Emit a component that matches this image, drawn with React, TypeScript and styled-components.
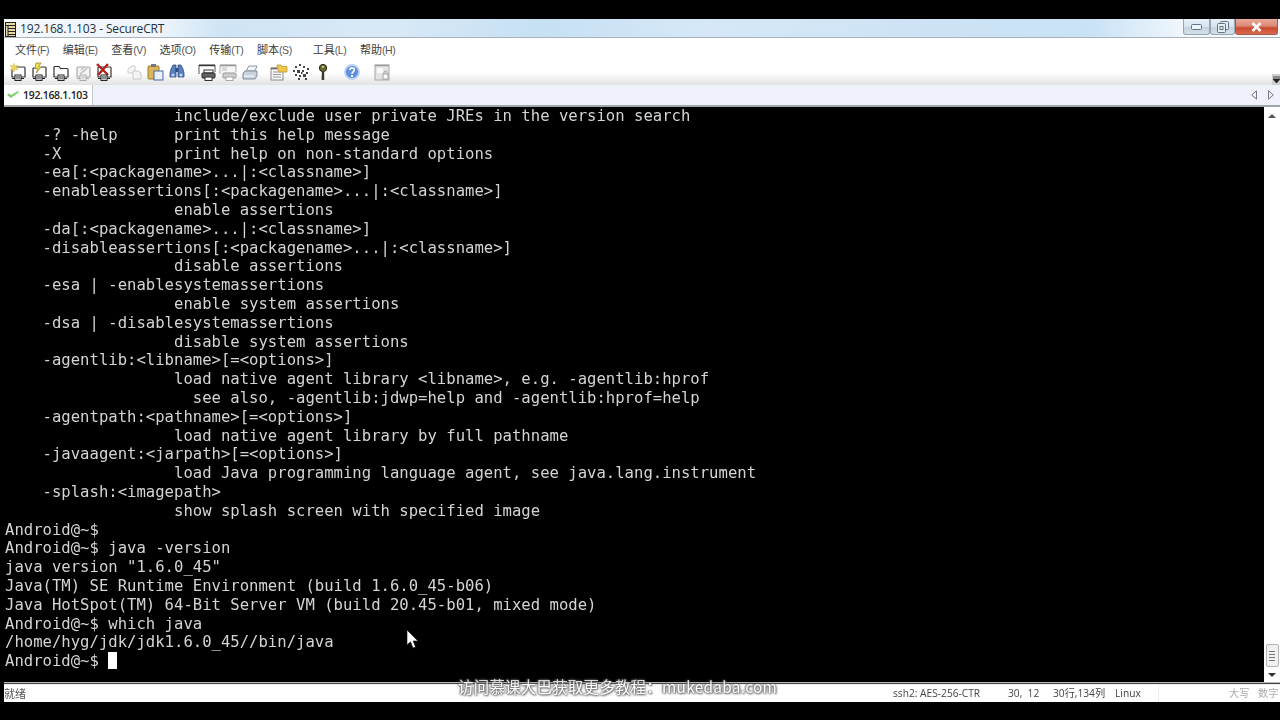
import React from "react";
import styled, { createGlobalStyle } from "styled-components";

const Global = createGlobalStyle`
  html, body { margin: 0; padding: 0; background: #000; }
  body { width: 1280px; height: 720px; overflow: hidden; }
`;

const Page = styled.div`
  width: 1280px;
  height: 720px;
  box-sizing: border-box;
  padding: 19px 0 18px 4px;
  background: #000;
  position: relative;
  overflow: hidden;
`;
const Win = styled.div`
  height: 100%;
  display: flex;
  flex-direction: column;
  filter: blur(0.45px);
`;
const TitleBar = styled.div`
  height: 19px;
  flex: none;
  display: flex;
  align-items: flex-start;
  box-sizing: border-box;
  border-bottom: 1px solid #a9b3bd;
  background: linear-gradient(90deg, #f4f8fc 0%, #eef5fb 12%, #cfe4f5 17%, #d9e9f6 30%, #c6e0f4 42%, #d6e8f7 55%, #cde3f5 72%, #c9e2f6 85%, #e8f2fa 91%, #f6f9fc 93%);
`;
const TitleIcon = styled.svg`
  width: 11px;
  height: 15px;
  margin: 3px 0 0 1px;
  flex: none;
`;
const TitleText = styled.div`
  font: 12px/19px "Open Sans", "Liberation Sans", sans-serif;
  letter-spacing: -0.14px;
  color: #27313a;
  margin-left: 4px;
`;
const WinBtns = styled.div`
  margin-left: auto;
  margin-right: 2px;
  display: flex;
  height: 16px;
`;
const WinBtn = styled.div<{ $w: number; $close?: boolean }>`
  width: ${(p) => p.$w}px;
  box-sizing: border-box;
  display: flex;
  align-items: center;
  justify-content: center;
  border: 1px solid ${(p) => (p.$close ? "#a5584c" : "#97a6b4")};
  border-top: 0;
  border-radius: 0 0 3px 3px;
  background: ${(p) =>
    p.$close
      ? "linear-gradient(180deg,#e8a79a 0%,#dc8a78 45%,#c9492f 60%,#d96c50 100%)"
      : "linear-gradient(180deg,#e6eef5 0%,#d9e5ef 50%,#c5d4e0 55%,#d3e0ea 100%)"};
`;
const MenuBar = styled.div`
  height: 20px;
  flex: none;
  background: #fff;
  display: flex;
  align-items: center;
  padding: 1px 0 0 11px;
  box-sizing: border-box;
  font: 11px/18px "Noto Sans CJK SC", "Liberation Sans", sans-serif;
  color: #3a3a3a;
`;
const MenuItem = styled.div<{ $gap?: number }>`
  margin-left: ${(p) => p.$gap ?? 13.6}px;
  &:first-child { margin-left: 0; }
  white-space: nowrap;
  small { font: 10.5px "Liberation Sans", sans-serif; letter-spacing: -0.4px; color: #555; }
`;
const Toolbar = styled.div`
  height: 27px;
  flex: none;
  display: flex;
  align-items: center;
  gap: 8px;
  padding-left: 3px;
  position: relative;
  background: linear-gradient(180deg, #fff 0%, #fff 55%, #f0f0f0 78%, #e2e2e2 100%);
`;
const Group = styled.div`
  display: flex;
`;
const ToolBtn = styled.div`
  width: 21.6px;
  height: 20px;
  display: flex;
  align-items: center;
  justify-content: center;
`;
const ToolIcon = styled.svg`
  width: 18px;
  height: 18px;
  overflow: visible;
`;
const Chevron = styled.div`
  margin-left: auto;
  align-self: flex-end;
  width: 8px;
  height: 11px;
  background: #d0d0d0;
  display: flex;
  align-items: center;
  justify-content: center;
`;
const TabBar = styled.div`
  height: 22px;
  flex: none;
  display: flex;
  align-items: stretch;
  box-sizing: border-box;
  border-bottom: 2px solid #a2a6aa;
  background: #eff2fa;
`;
const Tab = styled.div`
  width: 89px;
  box-sizing: border-box;
  background: #fff;
  border-right: 1px solid #c6c9ce;
  display: flex;
  align-items: center;
  padding-left: 3px;
  gap: 4px;
  font: 600 10.5px/18px "Open Sans", "Liberation Sans", sans-serif;
  letter-spacing: -0.3px;
  color: #222;
`;
const TabNav = styled.div`
  margin-left: auto;
  margin-right: 6px;
  display: flex;
  align-items: center;
  gap: 11px;
`;
const Body = styled.div`
  flex: 1;
  min-height: 0;
  display: flex;
  background: #000;
  position: relative;
`;
const Terminal = styled.pre`
  flex: 1;
  margin: 0;
  padding: 0 0 0 1px;
  overflow: hidden;
  font-family: "DejaVu Sans Mono", "Liberation Mono", monospace;
  font-size: 15.6px;
  line-height: 18.79px;
  color: #d4d4d4;
`;
const Caret = styled.span`
  display: inline-block;
  width: 9px;
  height: 17px;
  background: #fff;
  vertical-align: -3px;
`;
const Scrollbar = styled.div`
  width: 16px;
  flex: none;
  background: #fff;
  display: flex;
  flex-direction: column;
  align-items: center;
  padding: 7px 0 5px;
  box-sizing: border-box;
`;
const Thumb = styled.div`
  margin-top: auto;
  width: 13px;
  height: 23px;
  box-sizing: border-box;
  border: 1px solid #b5b5b5;
  border-radius: 2px;
  background: #f0f0f0;
  display: flex;
  flex-direction: column;
  align-items: center;
  justify-content: center;
  gap: 2px;
  margin-bottom: 6px;
  i { display: block; width: 6px; height: 1px; background: #777; }
`;
const StatusGap = styled.div`
  height: 3px;
  flex: none;
  background: linear-gradient(180deg, #b9b9b9 0, #b9b9b9 1px, #444 1px, #444 2px, #eee 2px);
`;
const StatusBar = styled.div`
  height: 17px;
  flex: none;
  background: #fff;
  display: flex;
  align-items: center;
  font: 10.2px/17px "Open Sans", "Liberation Sans", "Noto Sans CJK SC", sans-serif;
  color: #444;
  white-space: nowrap;
  overflow: hidden;
`;
const Ready = styled.div`
  flex: 1;
  font-family: "Noto Sans CJK SC", sans-serif;
  font-size: 11px;
  color: #555;
`;
const Pane = styled.div<{ $w: number; $muted?: boolean; $line?: boolean }>`
  width: ${(p) => p.$w}px;
  flex: none;
  color: ${(p) => (p.$muted ? "#aaa" : "#444")};
  border-right: ${(p) => (p.$line ? "1px solid #eee" : "0")};
  box-sizing: border-box;
`;
const Watermark = styled.div`
  position: absolute;
  left: 458px;
  top: 676px;
  font: 15.4px/20px "Noto Sans CJK SC", "Liberation Sans", sans-serif;
  letter-spacing: 0.3px;
  color: #fff;
  white-space: nowrap;
  text-shadow: 0 0 2px #555, 1px 1px 2px #555, -1px 0 2px #666, 0 0 3px #777;
  filter: blur(0.5px);
  opacity: 0.85;
`;
const Pointer = styled.svg`
  position: absolute;
  left: 406px;
  top: 630px;
  width: 12px;
  height: 19px;
`;

const Plug = ({ c = "#222" }: { c?: string }) => (
  <g>
    <path d="M3 15.5h12" stroke={c} strokeWidth="1" />
    <rect x="6" y="12" width="6" height="5.5" fill="#fff" stroke={c} />
    <path d="M8 13v3.5M10 13v3.5" stroke={c} />
  </g>
);

const icons: React.ReactNode[][] = [
  [
    <>
      <path d="M5 4h10a1 1 0 0 1 1 1v9H3V7" fill="#fff" stroke="#333" strokeWidth="1.2" />
      <path d="M5 0l1 3 3-1-2 3 2 2-3-.5L5 9 4 6.500 1 7l2-2-2-3 3 1z" fill="#f2d45a" stroke="#c9b24a" strokeWidth=".4" />
      <Plug />
    </>,
    <>
      <path d="M3 5h3M11 4h4a1 1 0 0 1 1 1v9H3V5" fill="#fff" stroke="#333" strokeWidth="1.2" />
      <path d="M6 0h5L8.500 4H11L6.500 10 7.500 5.500H5z" fill="#f3e04f" stroke="#8d7f22" strokeWidth=".7" />
      <Plug />
    </>,
    <>
      <path d="M2 14V4.500a1 1 0 0 1 1-1h4l1.500 2H15a1 1 0 0 1 1 1V14z" fill="#fff" stroke="#333" strokeWidth="1.2" />
      <Plug />
    </>,
    <>
      <path d="M3 14V5a1 1 0 0 1 1-1h11a1 1 0 0 1 1 1v9z" fill="#f4f4f4" stroke="#aaa" strokeWidth="1.2" />
      <path d="M7 7l3-3M10 8l3-3M6 11l5-4" stroke="#bbb" strokeWidth="1.4" />
      <Plug c="#aaa" />
    </>,
    <>
      <path d="M3 14V5a1 1 0 0 1 1-1h11a1 1 0 0 1 1 1v9z" fill="#fff" stroke="#333" strokeWidth="1.2" />
      <path d="M2 1l11 11M13 1L3 12" stroke="#b3211c" strokeWidth="2.400" />
      <Plug />
    </>,
  ],
  [
    <>
      <path d="M3 6l4-3h3v7H3z" fill="#f6f6f6" stroke="#ccc" />
      <path d="M8 8h5l3 2v6H8z" fill="#f4f4f4" stroke="#c8c8c8" />
    </>,
    <>
      <rect x="2" y="3" width="11" height="13" rx="1" fill="#dcb45a" stroke="#9a7a32" />
      <rect x="5" y="1" width="5" height="3" fill="#777" />
      <rect x="8" y="8" width="9" height="9" fill="#eaf0fa" stroke="#4a6aa5" />
    </>,
    <>
      <path d="M3 6l2-4h3v12H2v-4zM15 6l-2-4h-3v12h6v-4z" fill="#5a7fbd" stroke="#2f4f88" strokeWidth=".8" />
      <rect x="7.500" y="5" width="3" height="4" fill="#2f4f88" />
      <circle cx="5" cy="12" r="1.600" fill="#bcd2f0" />
      <circle cx="13" cy="12" r="1.600" fill="#bcd2f0" />
    </>,
  ],
  [
    <>
      <path d="M1 11V2h16v7" fill="#fff" stroke="#555" strokeWidth="1" />
      <path d="M1 2.500h16" stroke="#333" strokeWidth="1.400" />
      <rect x="6" y="7" width="9" height="3" fill="#fff" stroke="#333" />
      <rect x="4" y="10" width="13" height="5" rx="1" fill="#666" stroke="#222" />
      <rect x="7" y="14" width="7" height="3.500" fill="#fff" stroke="#333" />
    </>,
    <>
      <path d="M1 11V2h16v7" fill="#f6f6f6" stroke="#aaa" strokeWidth="1" />
      <path d="M1 2.500h16" stroke="#999" strokeWidth="1.600" />
      <path d="M3 5h5M3 7h5" stroke="#bbb" />
      <rect x="4" y="10" width="13" height="5" rx="1" fill="#ccc" stroke="#999" />
      <rect x="7" y="14" width="7" height="3.500" fill="#fff" stroke="#aaa" />
    </>,
    <>
      <path d="M5 8l3-5h8l-2 5z" fill="#f3f5f8" stroke="#8a96a5" />
      <path d="M2 10l2-2h12v5l-2 3H2z" fill="#c8d2de" stroke="#7f8c9c" />
      <path d="M3 13h10" stroke="#eef2f6" strokeWidth="1.400" />
    </>,
  ],
  [
    <>
      <rect x="1" y="5" width="12" height="12" fill="#f7f7f7" stroke="#8a8a8a" />
      <path d="M1 5.500h12" stroke="#666" strokeWidth="1.500" />
      <path d="M3 9h8M3 11.500h8M3 14h8" stroke="#999" />
      <path d="M7 5V2h4l1 1.500h5V9H9z" fill="#f0c74e" stroke="#b08c27" strokeWidth=".7" />
    </>,
    <path
      d="M3 3h2v2H3zM7 1h2v2H7zM11 3h2v2h-2zM15 5h2v2h-2zM1 7h2v2H1zM5 7h3v3H5zM10 7h2v2h-2zM14 9h2v2h-2zM3 11h2v2H3zM7 12h2v2H7zM11 11h3v3h-3zM6 15h2v2H6zM13 15h2v2h-2zM9 9h1.500v2H9z"
      fill="#444"
    />,
    <>
      <circle cx="9" cy="5" r="3.600" fill="#6b6a30" stroke="#1f1f10" />
      <circle cx="9" cy="3.800" r="1" fill="#e2dfa8" />
      <path d="M7.800 8h2.400v9H8l-.7-1 .7-1-.7-1 .5-1z" fill="#3b3b22" />
    </>,
    <>
      <circle cx="9" cy="9" r="7" fill="#5f90dd" stroke="#bcd0ef" strokeWidth="1.800" />
      <path d="M6.800 7c.3-2.800 4.700-2.600 4.500 0 0 2-2.300 1.800-2.300 3.700" fill="none" stroke="#fff" strokeWidth="1.700" />
      <path d="M9 12v2" stroke="#fff" strokeWidth="1.800" />
    </>,
    <>
      <rect x="2" y="2" width="14" height="15" fill="#e4e4e4" stroke="#a8a8a8" />
      <path d="M2 2.500h14" stroke="#9a9a9a" strokeWidth="1.500" />
      <rect x="4" y="5" width="6" height="5" fill="#f8f8f8" />
      <rect x="10" y="11" width="5" height="5" fill="#fff" stroke="#a0a0a0" />
      <path d="M11 11V9.500a1.500 1.500 0 0 1 3 0V11" fill="none" stroke="#a0a0a0" />
    </>,
  ],
];

const menus: [string, string, number?][] = [
  ["文件", "(F)"],
  ["编辑", "(E)"],
  ["查看", "(V)"],
  ["选项", "(O)"],
  ["传输", "(T)"],
  ["脚本", "(S)"],
  ["工具", "(L)", 21],
  ["帮助", "(H)"],
];

const lines = [
  "                  include/exclude user private JREs in the version search",
  "    -? -help      print this help message",
  "    -X            print help on non-standard options",
  "    -ea[:<packagename>...|:<classname>]",
  "    -enableassertions[:<packagename>...|:<classname>]",
  "                  enable assertions",
  "    -da[:<packagename>...|:<classname>]",
  "    -disableassertions[:<packagename>...|:<classname>]",
  "                  disable assertions",
  "    -esa | -enablesystemassertions",
  "                  enable system assertions",
  "    -dsa | -disablesystemassertions",
  "                  disable system assertions",
  "    -agentlib:<libname>[=<options>]",
  "                  load native agent library <libname>, e.g. -agentlib:hprof",
  "                    see also, -agentlib:jdwp=help and -agentlib:hprof=help",
  "    -agentpath:<pathname>[=<options>]",
  "                  load native agent library by full pathname",
  "    -javaagent:<jarpath>[=<options>]",
  "                  load Java programming language agent, see java.lang.instrument",
  "    -splash:<imagepath>",
  "                  show splash screen with specified image",
  "Android@~$",
  "Android@~$ java -version",
  'java version "1.6.0_45"',
  "Java(TM) SE Runtime Environment (build 1.6.0_45-b06)",
  "Java HotSpot(TM) 64-Bit Server VM (build 20.45-b01, mixed mode)",
  "Android@~$ which java",
  "/home/hyg/jdk/jdk1.6.0_45//bin/java",
];

export default function App() {
  return (
    <Page>
      <Global />
      <Win>
        <TitleBar>
          <TitleIcon viewBox="0 0 11 15">
            <rect x="0.500" y="0.500" width="10" height="14" fill="#e6d9a8" stroke="#222" />
            <path d="M0 3.500h11M3 6.500h8M3 9.500h8M3 12.500h8M3 4v10" stroke="#222" />
          </TitleIcon>
          <TitleText>192.168.1.103 - SecureCRT</TitleText>
          <WinBtns>
            <WinBtn $w={27}>
              <svg width="11" height="6" viewBox="0 0 11 6">
                <rect x=".5" y=".5" width="10" height="5" rx="1" fill="#eef3f7" stroke="#5f7488" />
              </svg>
            </WinBtn>
            <WinBtn $w={25}>
              <svg width="12" height="12" viewBox="0 0 12 12">
                <rect x="3.500" y=".5" width="8" height="8" rx="1" fill="#e7eef4" stroke="#5f7488" />
                <rect x=".5" y="2.500" width="8" height="9" rx="1" fill="#e7eef4" stroke="#5f7488" />
                <rect x="3" y="5.500" width="3" height="3" fill="none" stroke="#5f7488" />
              </svg>
            </WinBtn>
            <WinBtn $w={43} $close>
              <svg width="11" height="10" viewBox="0 0 11 10">
                <path d="M1.500 1l8 8M9.500 1l-8 8" stroke="#fff" strokeWidth="2.600" />
              </svg>
            </WinBtn>
          </WinBtns>
        </TitleBar>
        <MenuBar>
          {menus.map(([a, b, g]) => (
            <MenuItem key={a} $gap={g}>
              {a}
              <small>{b}</small>
            </MenuItem>
          ))}
        </MenuBar>
        <Toolbar>
          {icons.slice(0, 3).map((g, i) => (
            <Group key={i}>
              {g.map((ic, j) => (
                <ToolBtn key={j}>
                  <ToolIcon viewBox="0 0 18 18">{ic}</ToolIcon>
                </ToolBtn>
              ))}
            </Group>
          ))}
          <Group>
            {icons[3].slice(0, 3).map((ic, j) => (
              <ToolBtn key={j}>
                <ToolIcon viewBox="0 0 18 18">{ic}</ToolIcon>
              </ToolBtn>
            ))}
          </Group>
          {icons[3].slice(3).map((ic, j) => (
            <Group key={j}>
              <ToolBtn>
                <ToolIcon viewBox="0 0 18 18">{ic}</ToolIcon>
              </ToolBtn>
            </Group>
          ))}
          <Chevron>
            <svg width="7" height="7" viewBox="0 0 7 7">
              <path d="M0 1h7M0 3h7L3.500 7z" stroke="#222" fill="#222" strokeWidth=".8" />
            </svg>
          </Chevron>
        </Toolbar>
        <TabBar>
          <Tab>
            <svg width="12" height="8" viewBox="0 0 12 8">
              <path d="M0 4l4 3 8-6-1-1-7 4-2-1.500z" fill="#7ccf6a" />
            </svg>
            192.168.1.103
          </Tab>
          <TabNav>
            <svg width="6" height="10" viewBox="0 0 6 10">
              <path d="M5.500 .8v8.400L.7 5z" fill="#eef" stroke="#778" />
            </svg>
            <svg width="6" height="10" viewBox="0 0 6 10">
              <path d="M.5 .8v8.400L5.300 5z" fill="#eef" stroke="#778" />
            </svg>
          </TabNav>
        </TabBar>
        <Body>
          <Terminal>
            {lines.join("\n")}
            {"\nAndroid@~$ "}
            <Caret />
          </Terminal>
          <Scrollbar>
            <svg width="8" height="4" viewBox="0 0 8 4">
              <path d="M4 0l4 4H0z" fill="#555" />
            </svg>
            <Thumb>
              <i />
              <i />
              <i />
              <i />
            </Thumb>
            <svg width="8" height="4" viewBox="0 0 8 4">
              <path d="M4 4l4-4H0z" fill="#333" />
            </svg>
          </Scrollbar>
        </Body>
        <StatusGap />
        <StatusBar>
          <Ready>就绪</Ready>
          <Pane $w={115}>ssh2: AES-256-CTR</Pane>
          <Pane $w={45}>30,&nbsp;&nbsp;12</Pane>
          <Pane $w={62}>30行,134列</Pane>
          <Pane $w={44} $line>Linux</Pane>
          <Pane $w={70} />
          <Pane $w={29} $muted>大写</Pane>
          <Pane $w={22} $muted>数字</Pane>
        </StatusBar>
      </Win>
      <Pointer viewBox="0 0 12 19">
        <path d="M1 0v15l3.500-3.200L7 18l2.600-1-2.500-6H12z" fill="#fff" stroke="#111" strokeWidth=".6" />
      </Pointer>
      <Watermark>访问慕课大巴获取更多教程：mukedaba.com</Watermark>
    </Page>
  );
}
